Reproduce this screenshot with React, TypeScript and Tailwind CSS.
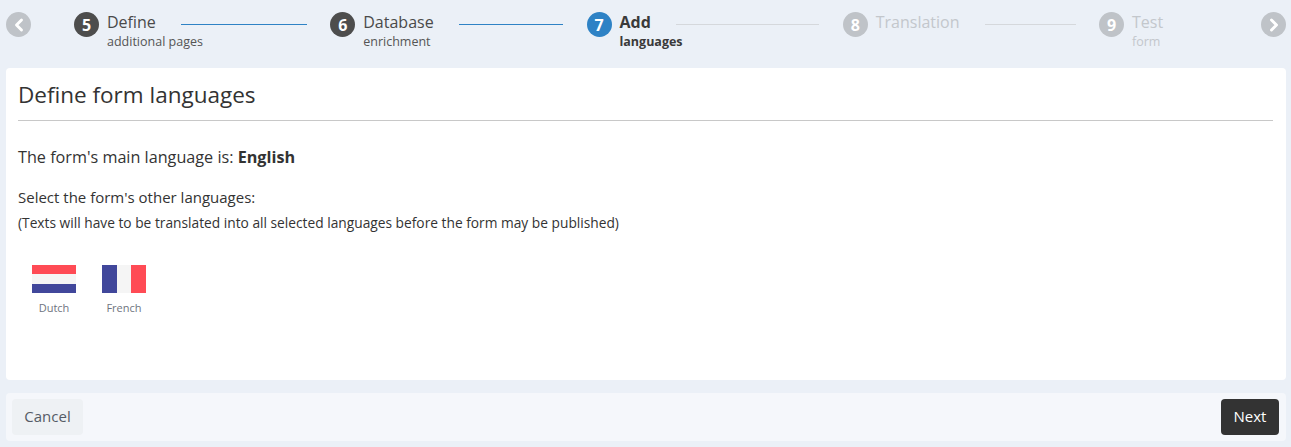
import { ChevronLeft, ChevronRight } from "lucide-react";

const steps = [
  { num: 5, title: "Define", sub: "additional pages", state: "done" },
  { num: 6, title: "Database", sub: "enrichment", state: "done" },
  { num: 7, title: "Add", sub: "languages", state: "active" },
  { num: 8, title: "Translation", sub: "", state: "todo" },
  { num: 9, title: "Test", sub: "form", state: "todo" },
];

const Step = ({ step, last }: { step: (typeof steps)[number]; last: boolean }) => {
  const circle =
    step.state === "done" ? "bg-[#4d4d4d]" : step.state === "active" ? "bg-[#2e82c5]" : "bg-[#bfc3c8]";
  const title =
    step.state === "done"
      ? "text-[#4a4a4a]"
      : step.state === "active"
        ? "text-[#3a3a3a] font-bold"
        : "text-[#c3c7cc]";
  const sub =
    step.state === "done"
      ? "text-[#555555]"
      : step.state === "active"
        ? "text-[#3a3a3a] font-bold"
        : "text-[#c3c7cc]";
  const line = step.state === "done" ? "bg-[#2e82c5]" : "bg-[#d5d8dc]";

  return (
    <div className="flex w-[256.25px] shrink-0 items-start">
      <div
        className={`mt-[12px] flex h-[25px] w-[25px] shrink-0 items-center justify-center rounded-full text-[16px] font-bold text-white ${circle}`}
      >
        {step.num}
      </div>
      <div className="ml-2 mr-[23.5px] min-w-0 flex-1 pt-[10px]">
        <div className="flex items-center">
          <span className={`text-base leading-[24px] ${title}`}>{step.title}</span>
          {!last && <div className={`ml-[25px] h-px flex-1 translate-y-[2px] ${line}`} />}
        </div>
        <div className={`text-[12.5px] leading-[16px] ${sub}`}>{step.sub || "\u00a0"}</div>
      </div>
    </div>
  );
};

const Flag = ({ label, colors, vertical }: { label: string; colors: string[]; vertical?: boolean }) => (
  <div className="flex w-[70px] flex-col items-center">
    <div className={`flex h-[28px] w-[44px] ${vertical ? "flex-row" : "flex-col"}`}>
      {colors.map((c) => (
        <div key={c} className={`flex-1 ${c}`} />
      ))}
    </div>
    <span className="mt-[7px] text-[11px] leading-[16px] text-[#6f7480]">{label}</span>
  </div>
);

export default function App() {
  return (
    <div className="flex h-[447px] flex-col bg-[#ebf0f7] pl-[6px] pr-[5px] font-['Open_Sans',sans-serif] text-[#333333]">
      <div className="relative flex h-[68px] shrink-0">
        <button className="absolute left-0 top-[12px] flex h-[25px] w-[25px] items-center justify-center rounded-full bg-[#bfc3c8] text-white">
          <ChevronLeft size={20} strokeWidth={3.5} />
        </button>
        <div className="ml-[68px] flex">
          {steps.map((s, i) => (
            <Step key={s.num} step={s} last={i === steps.length - 1} />
          ))}
        </div>
        <button className="absolute right-0 top-[12px] flex h-[25px] w-[25px] items-center justify-center rounded-full bg-[#bfc3c8] text-white">
          <ChevronRight size={20} strokeWidth={3.5} />
        </button>
      </div>

      <div className="h-[312px] shrink-0 rounded bg-white pl-3 pr-[13px]">
        <h1 className="border-b border-[#c8c8c8] pb-[9px] pt-[10px] text-[22.5px] leading-[33px] text-[#333333]">
          Define form languages
        </h1>
        <p className="mt-[24px] text-[16.2px] leading-[24px]">
          The form's main language is: <b>English</b>
        </p>
        <p className="mt-[16px] text-[15px] leading-[24px]">Select the form's other languages:</p>
        <p className="mt-[4px] text-[13.75px] leading-[20px]">
          (Texts will have to be translated into all selected languages before the form may be published)
        </p>
        <div className="mt-[32px] flex pl-[1px]">
          <Flag label="Dutch" colors={["bg-[#ff4b55]", "bg-[#f5f5f5]", "bg-[#41479b]"]} />
          <Flag label="French" colors={["bg-[#41479b]", "bg-[#f5f5f5]", "bg-[#ff4b55]"]} vertical />
        </div>
      </div>

      <div className="mt-[13px] flex h-[48px] shrink-0 items-center justify-between rounded bg-[#f5f7fb] pl-[6px] pr-[7px]">
        <button className="h-[36px] w-[71px] rounded bg-[#eef1f4] pb-[2px] text-[15px] text-[#555c66]">Cancel</button>
        <button className="h-[36px] w-[58px] rounded bg-[#333333] pb-[2px] text-[15px] text-white">Next</button>
      </div>
    </div>
  );
}
